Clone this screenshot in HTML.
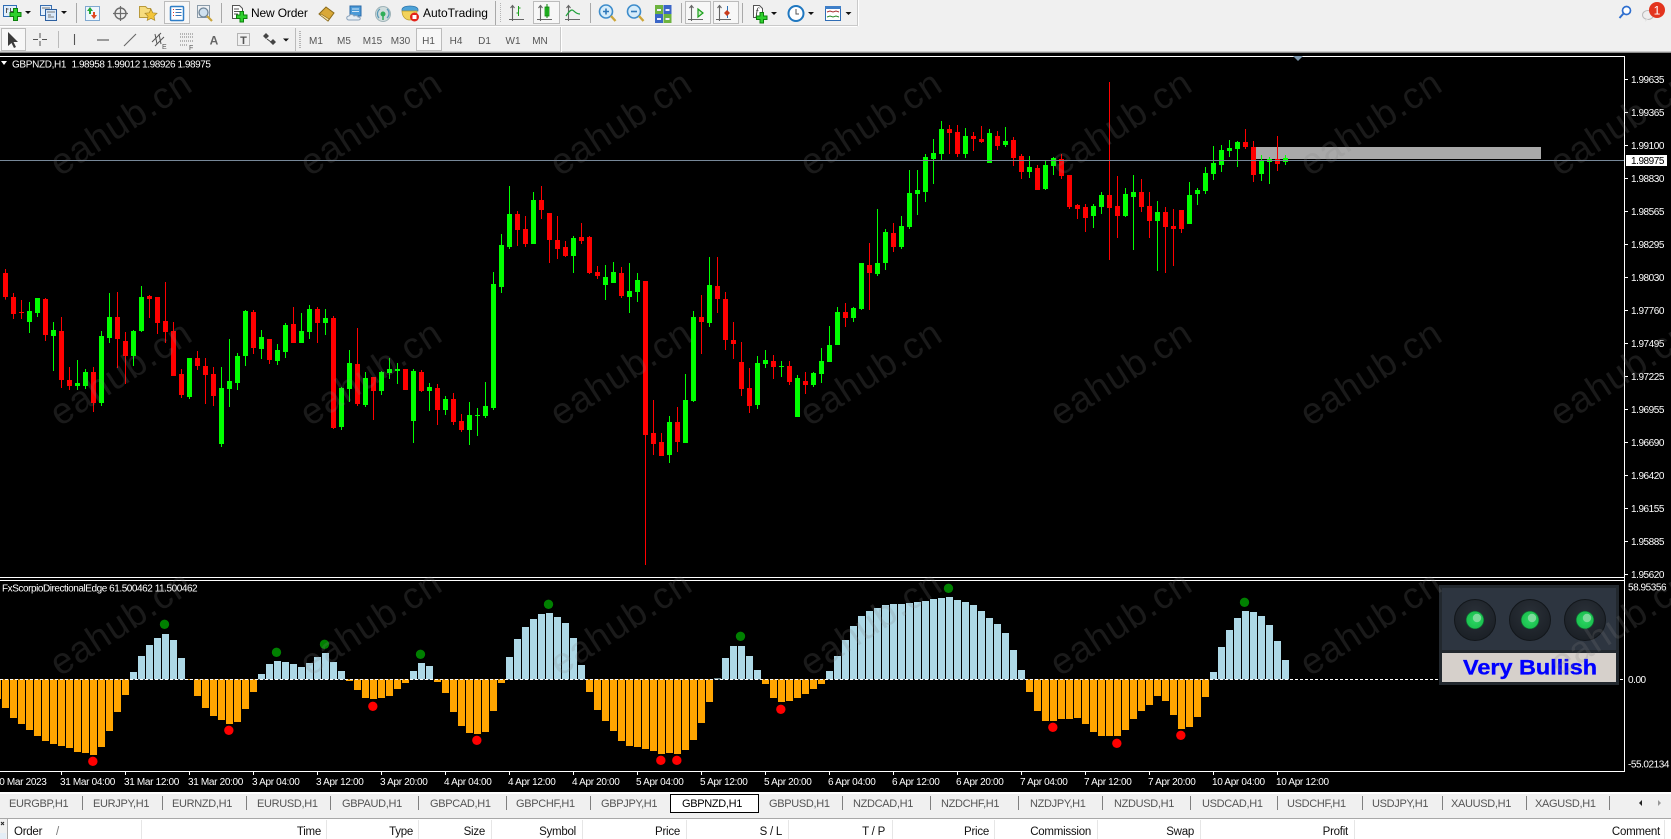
<!DOCTYPE html>
<html lang="en">
<head>
<meta charset="utf-8">
<title>GBPNZD,H1</title>
<style>
html,body{margin:0;padding:0;background:#f0f0f0;width:1671px;height:839px;overflow:hidden}
svg{display:block;position:absolute;left:0;top:0;font-family:"Liberation Sans",Arial,sans-serif}
.c{shape-rendering:crispEdges;fill:none}
.g{fill:none}
.ax{fill:#fff;font-size:10px;letter-spacing:-.45px}
.tm{fill:#fff;font-size:10px;letter-spacing:-.33px}
.tb{fill:#555;font-size:11px;letter-spacing:-.32px}
.th{fill:#111;font-size:11.5px;letter-spacing:-.25px}
.tf{fill:#555;font-size:10px;text-anchor:middle}
.wm{fill:rgba(128,128,128,.2);font-size:37px;letter-spacing:1.1px}
</style>
</head>
<body>
<svg width="1671" height="839" viewBox="0 0 1671 839" xmlns="http://www.w3.org/2000/svg">
<defs>
<radialGradient id="bz" cx="50%" cy="35%" r="65%"><stop offset="0" stop-color="#2a3038"/><stop offset="1" stop-color="#1b2026"/></radialGradient>
<radialGradient id="led" cx="50%" cy="50%" r="50%"><stop offset="0" stop-color="#2ad763"/><stop offset="1" stop-color="#1cc04f"/></radialGradient>
</defs>
<!-- toolbars -->
<rect width="1671" height="53" fill="#f0f0f0"/>
<path class="c" stroke="#c9c9c9" d="M0 25.500H858M0 51.500H1671M857.500 0V26M560.500 26V52"/>
<path class="c" stroke="#fff" d="M0 26.500H857M858.500 0V26M561.500 27V52"/>
<rect y="52" width="1671" height="1" fill="#8a8a8a"/>
<!-- separators row1 -->
<path class="c" stroke="#a9a9a9" d="M76.500 3V23M221.500 3V23M590.500 3V23M681.500 3V23M742.500 3V23M495.500 1V25"/>
<path class="c" stroke="#b5b5b5" stroke-dasharray="1 1" d="M500.500 3V23"/>
<!-- pressed boxes -->
<g class="c" stroke="#bcbcbc" style="fill:#f7f7f7">
<rect x="164.500" y="1.500" width="25" height="22"/>
<rect x="533.500" y="1.500" width="26" height="22"/>
<rect x="685.500" y="1.500" width="25" height="22"/>
<rect x="713.500" y="1.500" width="25" height="22"/>
<rect x="1.500" y="28.500" width="24" height="22"/>
<rect x="416.500" y="28.500" width="25" height="22"/>
</g>
<!-- new chart -->
<rect x="3.500" y="5.500" width="13" height="11" fill="#e2effb" stroke="#2f6db5"/>
<path d="M6.500 8v5M6.500 9h2M10.500 8v4M10.500 11.500h3" stroke="#555" fill="none"/>
<path d="M13.500 8.500h4v4h3.500v4h-3.500v4h-4v-4H10v-4h3.500z" fill="#2ed12e" stroke="#0c800c"/>
<path d="M25 11h6l-3 3z" fill="#111"/>
<!-- profiles -->
<rect x="40.500" y="5.500" width="11" height="10" fill="#e6f0fb" stroke="#3a6fb0"/>
<rect x="45.500" y="9.500" width="11" height="11" fill="#d9e8f9" stroke="#2c5f9f"/>
<path d="M42 8h8M47 12h8M48 15h3M48 17h6" stroke="#777" fill="none"/>
<path d="M61 11h6l-3 3z" fill="#111"/>
<!-- market watch -->
<rect x="85.500" y="6.500" width="14" height="14" fill="#eef5fc" stroke="#7fa8d0"/>
<path d="M90 7l3 4h-2v3h-2v-3h-2z" fill="#22a83a"/>
<path d="M94 19l-3-4h2v-3h2v3h2z" fill="#e0481e"/>
<!-- navigator crosshair -->
<circle cx="120.500" cy="13.500" r="5.500" fill="none" stroke="#6d6d6d" stroke-width="1.400"/>
<path d="M120.500 6v15M113 13.500h15" stroke="#6d6d6d" stroke-width="1.200"/>
<!-- folder star -->
<path d="M139.500 6.500h6l2 2h3v9h-11z" fill="#f6dc7e" stroke="#b99a3c"/>
<path d="M151 9l1.800 3.800 4.200.5-3 2.900.8 4.200-3.800-2-3.800 2 .8-4.200-3-2.900 4.200-.5z" fill="#f3c53a" stroke="#a9892f" stroke-width=".7"/>
<!-- terminal -->
<rect x="170.500" y="6.500" width="13" height="14" rx="1" fill="#fff" stroke="#2f7ec7" stroke-width="1.500"/>
<path d="M173 9.500h1M173 12.500h1M173 15.500h1" stroke="#d33"/><path d="M175.500 9.500h6M175.500 12.500h6M175.500 15.500h6" stroke="#3573b5"/>
<!-- tester -->
<rect x="197.500" y="5.500" width="12" height="12" fill="#eef1f4" stroke="#8a9aa8"/>
<circle cx="203.500" cy="12.500" r="4.500" fill="#cfe0ee" stroke="#6d8396" stroke-width="1.300"/>
<path d="M207 16l5 5" stroke="#c9a33a" stroke-width="2.200"/>
<!-- new order -->
<path d="M232.500 5.500h7l3 3v10h-10z" fill="#fff" stroke="#555"/>
<path d="M234 9h5M234 11.500h6M234 14h4" stroke="#555"/>
<path d="M240 11.500h3.500v3.500h3.500v3.500h-3.500v3.500H240v-3.500h-3.500V15H240z" fill="#2ed12e" stroke="#0c800c"/>
<text x="251" y="17" font-size="12" fill="#000" letter-spacing="-.15">New Order</text>
<!-- book -->
<path d="M319 14l7-7 8 6-6 8z" fill="#d9a838" stroke="#8a6a1a"/>
<path d="M320 15l8 6 1-2-8-5z" fill="#f3e2ac" stroke="#8a6a1a" stroke-width=".6"/>
<!-- market -->
<rect x="350" y="6" width="11" height="10" fill="#4a9ad8" stroke="#2a6aa8"/>
<path d="M352 9h7M352 11.500h7" stroke="#cfe6f8"/>
<path d="M349 20c-3 0-3-4 0-4 1-2 4-2 5 0 2-1 4 0 4 1 3 0 3 3 0 3z" fill="#e6edf4" stroke="#8aa2ba"/>
<!-- signals -->
<circle cx="383" cy="14" r="7.500" fill="#cfdcdc" stroke="#9fb3b8"/>
<path d="M379 18a6 6 0 0 1 1-9M387 9a6 6 0 0 1 0 9" fill="none" stroke="#5a9ab8" stroke-width="1.300"/>
<circle cx="383" cy="14" r="2.500" fill="#2fae58"/><path d="M383 14v6" stroke="#2fae58" stroke-width="1.500"/>
<!-- autotrading -->
<path d="M402 9c2-4 14-4 16 0v2h-16z" fill="#4da3d8" stroke="#2c72a8" stroke-width=".7"/>
<path d="M402 11h15c0 7-4 9-7.500 9S402 17 402 11z" fill="#f3d35a" stroke="#b89a2c" stroke-width=".7"/>
<circle cx="414.500" cy="17" r="4.500" fill="#e2231a"/><rect x="412.500" y="15" width="4" height="4" fill="#fff"/>
<text x="423" y="17" font-size="12" fill="#000">AutoTrading</text>
<!-- chart types -->
<g fill="none" stroke="#666" stroke-width="1.100">
<path d="M512.500 6v15M509 19.500h15M510.500 8l2-2.500 2 2.500"/>
<path d="M540.500 6v15M537 19.500h15M538.500 8l2-2.500 2 2.500"/>
<path d="M568.500 6v15M565 19.500h15M566.500 8l2-2.500 2 2.500"/>
<path d="M691.500 6v15M688 19.500h15M689.500 8l2-2.500 2 2.500"/>
<path d="M719.500 6v15M716 19.500h15M717.500 8l2-2.500 2 2.500"/>
</g>
<path d="M518.500 6v10M518.500 13h-2M518.500 8h2" stroke="#1aa01a" fill="none"/>
<rect x="545" y="7" width="4" height="9" fill="#2ed12e" stroke="#0c800c" stroke-width=".8"/><path d="M547 4v14" stroke="#0c800c"/>
<path d="M566 16c2-3 4-6 6-6s3 4 8 4" fill="none" stroke="#1fa03a" stroke-width="1.200"/>
<path d="M698 9l5 4-5 4z" fill="#cdeec6" stroke="#1aa01a" stroke-width="1.200"/>
<path d="M727.500 6v12" stroke="#2a6fb5"/><path d="M727 10l-3 3 3 3 3-3z" fill="#c93a1a"/>
<!-- zoom -->
<circle cx="606" cy="11.500" r="6.500" fill="#d6ecfa" stroke="#3d8ccb" stroke-width="1.600"/>
<path d="M603 11.500h6M606 8.500v6" stroke="#2f78b8" stroke-width="1.600"/>
<path d="M611 16l4.500 5" stroke="#cda63a" stroke-width="2.400"/>
<circle cx="634" cy="11.500" r="6.500" fill="#d6ecfa" stroke="#3d8ccb" stroke-width="1.600"/>
<path d="M631 11.500h6" stroke="#2f78b8" stroke-width="1.600"/>
<path d="M639 16l4.500 5" stroke="#cda63a" stroke-width="2.400"/>
<!-- tile -->
<rect x="655" y="5" width="8" height="9" fill="#6db33f"/><rect x="663.500" y="5" width="8" height="9" fill="#3a66c8"/>
<rect x="655" y="14" width="8" height="9" fill="#3a66c8"/><rect x="663.500" y="14" width="8" height="9" fill="#6db33f"/>
<path d="M657 10h4M665.500 10h4M657 19h4M665.500 19h4" stroke="#eef" stroke-width="2"/>
<!-- indicators -->
<path d="M753.500 5.500h6l3 3v9h-9z" fill="#fff" stroke="#555"/>
<text x="755.500" y="15" font-size="10" font-family="Liberation Serif" font-style="italic" fill="#222">f</text>
<path d="M760 12.500h3.500V16h3.500v3.500h-3.500V23H760v-3.500h-3.500V16H760z" fill="#2ed12e" stroke="#0c800c"/>
<path d="M771 12h6l-3 3z" fill="#111"/>
<!-- clock -->
<circle cx="796" cy="13.500" r="7.500" fill="#fff" stroke="#1f77c0" stroke-width="2"/>
<path d="M796 9v5h3" fill="none" stroke="#555"/>
<path d="M808 12h6l-3 3z" fill="#111"/>
<!-- templates -->
<rect x="825.500" y="6.500" width="15" height="14" fill="#fff" stroke="#2f6db5"/><rect x="825" y="6" width="16" height="3" fill="#3f7fc8"/>
<path d="M827 12l3-1 3 1 3-1 3 1" fill="none" stroke="#a33"/><path d="M827 17l3-1 3 1 3-1 3 1" fill="none" stroke="#2a8a2a"/>
<path d="M845.500 12h6l-3 3z" fill="#111"/>
<!-- search + bubble -->
<circle cx="1626.500" cy="10.500" r="4" fill="#fff" stroke="#2f6fcf" stroke-width="1.700"/>
<path d="M1623.500 13.500l-4 4.500" stroke="#2f6fcf" stroke-width="2"/>
<ellipse cx="1648" cy="15" rx="5.500" ry="4.500" fill="#eee" stroke="#bbb"/><path d="M1646 19l-1 3 3-3z" fill="#ddd"/>
<circle cx="1657" cy="10" r="8" fill="#e3341e"/>
<text x="1657" y="14.500" font-size="12" fill="#fff" text-anchor="middle">1</text>
<!-- row 2 -->
<path d="M8 32v14l3.500-3 2.500 5 2-1-2.500-5h4.500z" fill="#3a3a3a"/>
<path d="M40 33v5M40 41v5M33 39.500h5M42 39.500h5" stroke="#555" fill="none"/>
<path class="c" stroke="#bbb" d="M58.500 31V48M295.500 28V51"/>
<path class="c" stroke="#b5b5b5" stroke-dasharray="1 1" d="M299.500 31V49M300.500 31V49"/>
<path d="M74.500 34v11" stroke="#555" stroke-width="1.100"/>
<path d="M97 40h12" stroke="#555" stroke-width="1.100"/>
<path d="M124 46l12-12" stroke="#666" stroke-width="1.100"/>
<path d="M152 42l9-9M155 46l9-9M155 34l2 10M159 34l2 10" stroke="#555" fill="none"/>
<text x="162" y="49" font-size="7" fill="#555">E</text>
<path d="M180 34h13M180 37h13M180 41h13M180 45h7" stroke="#777" stroke-dasharray="1 1" fill="none"/>
<text x="189" y="50" font-size="7" fill="#555">F</text>
<text x="214" y="44.500" font-size="12" font-weight="bold" fill="#666" text-anchor="middle">A</text>
<rect x="237.500" y="33.500" width="12" height="12" fill="none" stroke="#777" stroke-dasharray="1 1"/>
<text x="243.500" y="44" font-size="11" font-weight="bold" fill="#555" text-anchor="middle">T</text>
<path d="M266 33l3 3-3 3-3-3zM273 39l3 3-3 3-3-3z" fill="#444"/><path d="M267 39l4 3" stroke="#444"/>
<path d="M283 38.500h6l-3 3z" fill="#111"/>
<g class="tf">
<text x="316" y="44">M1</text><text x="344" y="44">M5</text><text x="372.500" y="44">M15</text><text x="400.500" y="44">M30</text>
<text x="428.500" y="44">H1</text><text x="456" y="44">H4</text><text x="484.500" y="44">D1</text><text x="513" y="44">W1</text><text x="540" y="44">MN</text>
</g>

<!-- chart background -->
<rect y="53" width="1671" height="739" fill="#000"/>
<rect x="1256" y="147" width="285" height="12" fill="#a9a9a9"/>

<!-- candles A -->
<g transform="translate(.16667 260) scale(.3333333)">
<path class="g" stroke="#f00" stroke-width="3" d="M16 27V119M40 99V177M64 120V177M136 114V243M184 171V384M208 321V390M280 321V456M352 96V324M376 216V372M448 105V174M472 111V222M496 66V249M520 186V348M544 327V414M592 273V330M616 294V432M640 321V438M760 150V282M808 237V312M880 141V249M952 141V249M1000 168V507M1072 204V438M1120 351V480M1216 327V390"/>
<path class="g" stroke="#f00" stroke-width="15" d="M16 39V111M40 111V162M64 156V159M136 117V225M184 213V360M208 360V378M280 336V429M352 171V237M376 243V288M448 108V117M472 111V189M496 183V216M520 213V348M544 342V405M592 294V318M616 318V345M640 342V408M760 156V264M808 237V300M880 192V249M952 147V189M1000 174V504M1072 312V432M1120 351V393M1216 327V390"/>
<path class="g" stroke="#0f0" stroke-width="3" d="M88 126V219M112 114V171M160 186V333M232 300V390M256 327V387M304 213V438M328 99V249M400 210V318M424 78V216M568 294V417M664 321V561M688 237V441M712 279V390M736 150V318M784 210V297M832 252V315M856 189V294M904 159V249M928 135V237M976 147V225M1024 381V510M1048 270V426M1096 336V441M1144 333V405M1168 294V357M1192 309V372M1240 327V549"/>
<path class="g" stroke="#0f0" stroke-width="15" d="M88 153V186M112 114V159M160 210V228M232 369V378M256 336V378M304 228V429M328 171V234M400 213V288M424 111V213M568 294V411M664 384V552M688 363V387M712 288V369M736 153V288M784 231V267M832 270V303M856 195V276M904 213V249M928 147V216M976 174V189M1024 384V501M1048 309V387M1096 354V435M1144 336V393M1168 327V339M1192 327V333M1240 333V483"/>
</g>
<!-- candles B -->
<g transform="translate(420.16667 170) scale(.3333333)">
<path class="g" stroke="#f00" stroke-width="3" d="M4 600V666M52 642V765M100 669V765M124 732V786M292 123V228M316 138V231M364 48V147M388 129V279M412 138V267M436 213V261M484 159V222M508 198V312M532 288V327M604 291V384M676 333V1185M700 690V855M724 789V858M772 711V846M844 375V552M892 261V429M916 366V540M940 456V567M964 516V678M988 594V729M1060 555V627M1108 573V645M1156 606V672"/>
<path class="g" stroke="#f00" stroke-width="15" d="M4 606V663M52 654V720M100 687V756M124 753V780M292 132V180M316 177V222M364 90V120M388 129V210M412 210V237M436 231V258M484 201V213M508 201V309M532 306V318M604 309V378M676 333V795M700 789V822M724 816V858M772 756V816M844 441V456M892 348V387M916 387V510M940 510V522M964 576V657M988 654V708M1060 573V591M1108 588V636M1156 633V645"/>
<path class="g" stroke="#0f0" stroke-width="3" d="M28 639V723M76 678V735M148 696V825M172 714V798M196 636V744M220 306V720M244 192V369M268 48V237M340 66V222M460 198V309M556 285V390M580 276V339M628 279V429M652 309V396M748 738V879M796 612V819M820 423V696M868 261V471M1012 558V717M1036 540V594M1084 573V621M1132 615V741M1180 606V651M1204 534V639M1228 468V576M1252 411V525"/>
<path class="g" stroke="#0f0" stroke-width="15" d="M28 651V663M76 687V720M148 735V780M172 735V738M196 708V738M220 342V714M244 225V351M268 132V231M340 90V222M460 204V258M556 321V345M580 306V339M628 363V381M652 330V366M748 756V855M796 690V819M820 441V693M868 345V459M1012 579V705M1036 570V582M1084 588V591M1132 624V741M1180 609V645M1204 573V612M1228 525V576M1252 426V525"/>
</g>
<!-- candles C -->
<g transform="translate(840.16667 110) scale(.3333333)">
<path class="g" stroke="#f00" stroke-width="3" d="M16 579V651M88 399V600M160 339V426M328 45V132M352 45V141M400 66V123M424 48V99M472 63V120M520 81V168M544 132V207M592 165V240M664 132V207M688 195V297M712 282V327M736 282V366M808 -84V450M832 198V384M904 207V306M928 246V384M976 291V489M1000 297V468M1024 300V369M1216 57V117M1240 93V216M1312 78V183"/>
<path class="g" stroke="#f00" stroke-width="15" d="M16 606V624M88 465V489M160 369V411M328 57V69M352 66V132M400 78V87M424 87V96M472 78V108M520 90V144M544 138V186M592 174V240M664 147V198M688 195V291M712 285V297M736 291V324M808 255V294M832 288V318M904 246V291M928 288V333M976 306V351M1000 348V357M1024 300V357M1216 96V111M1240 111V195M1312 147V162"/>
<path class="g" stroke="#0f0" stroke-width="3" d="M40 591V636M64 459V600M112 297V498M136 357V480M184 318V417M208 180V357M232 180V315M256 132V276M280 87V222M304 33V153M376 54V144M448 57V159M496 51V111M568 138V204M616 153V240M640 141V195M760 282V354M784 246V312M856 234V321M880 195V420M952 273V483M1048 216V342M1072 234V285M1096 171V252M1120 108V210M1144 105V186M1168 90V141M1192 93V171M1264 135V213M1288 141V222M1336 135V165"/>
<path class="g" stroke="#0f0" stroke-width="15" d="M40 594V624M64 459V597M112 459V492M136 366V459M184 348V411M208 249V351M232 240V252M256 141V246M280 129V147M304 57V132M376 78V132M448 69V159M496 93V105M568 171V186M616 165V237M640 144V168M760 288V318M784 255V291M856 252V318M880 246V261M952 306V333M1048 255V342M1072 240V252M1096 189V243M1120 159V192M1144 120V165M1168 114V123M1192 96V117M1264 153V192M1288 147V156M1336 144V156"/>
</g>
<path class="c" stroke="#778899" d="M0 160.500H1625"/>

<!-- subwindow histogram -->
<g transform="translate(.16667 580) scale(.3333333)">
<path class="g" stroke="#ffa500" stroke-width="21" d="M-8 298V357M16 298V384M40 298V414M64 298V432M88 298V450M112 298V468M136 298V483M160 298V492M184 298V498M208 298V504M232 298V516M256 298V519M280 298V525M304 298V501M328 298V453M352 298V396M376 298V345M568 298V300M592 298V348M616 298V384M640 298V408M664 298V420M688 298V432M712 298V426M736 298V387M760 298V336M1048 298V303M1072 298V330M1096 298V354M1120 298V357M1144 298V354M1168 298V348M1192 298V327M1216 298V309M1312 298V306M1336 298V339M1360 298V396M1384 298V438M1408 298V459M1432 298V462M1456 298V456M1480 298V393M1504 298V309"/>
<path class="g" stroke="#add8e6" stroke-width="21" d="M400 298V276M424 298V228M448 298V195M472 298V174M496 298V162M520 298V180M544 298V234M784 298V282M808 298V252M832 298V243M856 298V246M880 298V252M904 298V261M928 298V249M952 298V231M976 298V219M1000 298V246M1024 298V273M1240 298V273M1264 298V249M1288 298V258"/>
<g fill="#f00"><circle cx="278" cy="544" r="14"/><circle cx="686" cy="451" r="14"/><circle cx="1118" cy="379" r="14"/><circle cx="1430" cy="481" r="14"/></g>
<g fill="#008000"><circle cx="493" cy="133" r="14"/><circle cx="829" cy="217" r="14"/><circle cx="973" cy="193" r="14"/><circle cx="1261" cy="223" r="14"/></g>
</g>
<g transform="translate(500.16667 580) scale(.3333333)">
<path class="g" stroke="#add8e6" stroke-width="21" d="M28 298V231M52 298V177M76 298V141M100 298V117M124 298V102M148 298V99M172 298V111M196 298V129M220 298V174M244 298V255M652 298V295M676 298V234M700 298V198M724 298V198M748 298V228M772 298V270M988 298V273M1012 298V228M1036 298V180M1060 298V138M1084 298V108M1108 298V93M1132 298V84M1156 298V75M1180 298V72M1204 298V72M1228 298V69M1252 298V66M1276 298V63M1300 298V57M1324 298V54M1348 298V51M1372 298V60M1396 298V66M1420 298V75M1444 298V93M1468 298V114M1492 298V132"/>
<path class="g" stroke="#ffa500" stroke-width="21" d="M268 298V336M292 298V390M316 298V423M340 298V453M364 298V483M388 298V498M412 298V501M436 298V507M460 298V513M484 298V522M508 298V519M532 298V522M556 298V510M580 298V480M604 298V429M628 298V366M796 298V312M820 298V354M844 298V366M868 298V363M892 298V354M916 298V342M940 298V327M964 298V312"/>
<g fill="#008000"><circle cx="145" cy="73" r="14"/><circle cx="721" cy="169" r="14"/><circle cx="1345" cy="25" r="14"/></g>
<g fill="#f00"><circle cx="482" cy="541" r="14"/><circle cx="530" cy="541" r="14"/><circle cx="842" cy="388" r="14"/></g>
</g>
<g transform="translate(1000.16667 580) scale(.3333333)">
<path class="g" stroke="#add8e6" stroke-width="21" d="M16 298V159M40 298V210M64 298V270M640 298V276M664 298V201M688 298V150M712 298V114M736 298V93M760 298V96M784 298V108M808 298V135M832 298V183M856 298V240"/>
<path class="g" stroke="#ffa500" stroke-width="21" d="M88 298V336M112 298V393M136 298V423M160 298V423M184 298V417M208 298V417M232 298V414M256 298V432M280 298V456M304 298V468M328 298V468M352 298V468M376 298V450M400 298V417M424 298V393M448 298V375M472 298V348M496 298V363M520 298V405M544 298V447M568 298V441M592 298V411M616 298V351"/>
<g fill="#f00"><circle cx="158" cy="442" r="14"/><circle cx="350" cy="490" r="14"/><circle cx="542" cy="466" r="14"/></g>
<circle cx="733" cy="67" r="14" fill="#008000"/>
</g>
<path class="c" stroke="#fff" stroke-dasharray="3 2" d="M0 679.500H1624"/>

<!-- frames -->
<path class="c" stroke="#fff" d="M0 56.500H1624.500V771.500H0M0 577.500H1624M0 580.500H1624"/>

<!-- chart labels -->
<path d="M1 61h6l-3 4z" fill="#fff"/>
<text x="12" y="67.500" fill="#fff" font-size="10" letter-spacing="-.35">GBPNZD,H1</text>
<text x="71.500" y="67.500" fill="#fff" font-size="10" letter-spacing="-.45">1.98958 1.99012 1.98926 1.98975</text>
<path d="M1293 56h10l-5 5z" fill="#7d97ad"/>
<text x="2" y="591.500" fill="#fff" font-size="10" letter-spacing="-.45">FxScorpioDirectionalEdge 61.500462 11.500462</text>

<!-- price axis -->
<path class="c" stroke="#fff" d="M1625 79.500h3M1625 112.500h3M1625 145.500h3M1625 178.500h3M1625 211.500h3M1625 244.500h3M1625 277.500h3M1625 310.500h3M1625 343.500h3M1625 376.500h3M1625 409.500h3M1625 442.500h3M1625 475.500h3M1625 508.500h3M1625 541.500h3M1625 574.500h3"/>
<g class="ax">
<text x="1631" y="83">1.99635</text><text x="1631" y="116">1.99365</text><text x="1631" y="149">1.99100</text>
<text x="1631" y="182">1.98830</text><text x="1631" y="215">1.98565</text><text x="1631" y="248">1.98295</text>
<text x="1631" y="281">1.98030</text><text x="1631" y="314">1.97760</text><text x="1631" y="347">1.97495</text>
<text x="1631" y="380">1.97225</text><text x="1631" y="413">1.96955</text><text x="1631" y="446">1.96690</text>
<text x="1631" y="479">1.96420</text><text x="1631" y="512">1.96155</text><text x="1631" y="545">1.95885</text>
<text x="1631" y="578">1.95620</text>
<text x="1628" y="590.500">58.95356</text><text x="1628" y="683">0.00</text><text x="1628" y="767.500">-55.02134</text>
</g>
<rect x="1626" y="155" width="41" height="11" fill="#fff"/>
<text x="1631" y="164" font-size="10" fill="#000" letter-spacing="-.45">1.98975</text>

<!-- indicator panel -->
<rect x="1439" y="585" width="180" height="100" fill="#22282e"/>
<rect x="1442" y="588" width="174" height="62" fill="#2d3540"/>
<rect x="1442" y="653" width="174" height="29" fill="#d6d0cb"/>
<g stroke="#12161a" fill="url(#bz)">
<circle cx="1475" cy="620" r="20.500"/><circle cx="1530" cy="620" r="20.500"/><circle cx="1585" cy="620" r="20.500"/>
</g>
<g fill="url(#led)" stroke="#0d6b30" stroke-width=".7">
<circle cx="1475" cy="620" r="8.800"/><circle cx="1530" cy="620" r="8.800"/><circle cx="1585" cy="620" r="8.800"/>
</g>
<g fill="#7edb9c">
<circle cx="1477" cy="618" r="4.200"/><circle cx="1532" cy="618" r="4.200"/><circle cx="1587" cy="618" r="4.200"/>
</g>
<text transform="translate(1463 674.500) scale(1.09 1)" font-size="21.500" font-weight="bold" fill="#0000ff" stroke="#0000ff" stroke-width=".35">Very Bullish</text>

<!-- time axis -->
<path class="c" stroke="#fff" d="M61.500 772v3M125.500 772v3M189.500 772v3M253.500 772v3M317.500 772v3M381.500 772v3M445.500 772v3M509.500 772v3M573.500 772v3M637.500 772v3M701.500 772v3M765.500 772v3M829.500 772v3M893.500 772v3M957.500 772v3M1021.500 772v3M1085.500 772v3M1149.500 772v3M1213.500 772v3M1277.500 772v3"/>
<g class="tm">
<text x="-6" y="785">30 Mar 2023</text><text x="60" y="785">31 Mar 04:00</text><text x="124" y="785">31 Mar 12:00</text><text x="188" y="785">31 Mar 20:00</text>
<text x="252" y="785">3 Apr 04:00</text><text x="316" y="785">3 Apr 12:00</text><text x="380" y="785">3 Apr 20:00</text>
<text x="444" y="785">4 Apr 04:00</text><text x="508" y="785">4 Apr 12:00</text><text x="572" y="785">4 Apr 20:00</text>
<text x="636" y="785">5 Apr 04:00</text><text x="700" y="785">5 Apr 12:00</text><text x="764" y="785">5 Apr 20:00</text>
<text x="828" y="785">6 Apr 04:00</text><text x="892" y="785">6 Apr 12:00</text><text x="956" y="785">6 Apr 20:00</text>
<text x="1020" y="785">7 Apr 04:00</text><text x="1084" y="785">7 Apr 12:00</text><text x="1148" y="785">7 Apr 20:00</text>
<text x="1212" y="785">10 Apr 04:00</text><text x="1276" y="785">10 Apr 12:00</text>
</g>

<!-- tab bar -->
<rect y="792" width="1671" height="2" fill="#fff"/>
<rect y="794" width="1671" height="45" fill="#f0f0f0"/>
<path class="c" stroke="#808080" d="M82.500 796v14M162.500 796v14M246.500 796v14M330.500 796v14M418.500 796v14M506.500 796v14M590.500 796v14M842.500 796v14M930.500 796v14M1018.500 796v14M1102.500 796v14M1190.500 796v14M1277.500 796v14M1362.500 796v14M1442.500 796v14M1526.500 796v14M1609.500 796v14"/>
<rect x="670.500" y="794.500" width="88" height="18" stroke="#000" class="c" style="fill:#fff"/>
<g class="tb">
<text x="9" y="807">EURGBP,H1</text><text x="93" y="807">EURJPY,H1</text><text x="172" y="807">EURNZD,H1</text><text x="257" y="807">EURUSD,H1</text>
<text x="342" y="807">GBPAUD,H1</text><text x="430" y="807">GBPCAD,H1</text><text x="516" y="807">GBPCHF,H1</text><text x="601" y="807">GBPJPY,H1</text>
<text x="682" y="807" style="fill:#000">GBPNZD,H1</text>
<text x="769" y="807">GBPUSD,H1</text><text x="853" y="807">NZDCAD,H1</text><text x="941" y="807">NZDCHF,H1</text><text x="1030" y="807">NZDJPY,H1</text>
<text x="1114" y="807">NZDUSD,H1</text><text x="1202" y="807">USDCAD,H1</text><text x="1287" y="807">USDCHF,H1</text><text x="1372" y="807">USDJPY,H1</text>
<text x="1451" y="807">XAUUSD,H1</text><text x="1535" y="807">XAGUSD,H1</text>
</g>
<path d="M1642 800v6l-3-3z" fill="#222"/><path d="M1658 800v6l3-3z" fill="#999"/>

<!-- table -->
<rect x="7" y="819" width="1664" height="20" fill="#fff"/>
<path class="c" stroke="#a8a8a8" d="M0 818.500H1671M7.500 818V839"/>
<rect x="0" y="833" width="6" height="6" fill="#e4edf6"/>
<path d="M1 822l3 3M4 822l-3 3" stroke="#222" fill="none"/>
<path class="c" stroke="#e6e6e6" d="M141.500 820v19M326.500 820v19M418.500 820v19M491.500 820v19M582.500 820v19M686.500 820v19M788.500 820v19M892.500 820v19M994.500 820v19M1097.500 820v19M1200.500 820v19M1354.500 820v19M1664.500 820v19"/>
<g class="th">
<text x="14" y="835">Order</text><text x="56" y="835" style="fill:#777">/</text>
<text x="321" y="835" text-anchor="end">Time</text><text x="413" y="835" text-anchor="end">Type</text><text x="485" y="835" text-anchor="end">Size</text>
<text x="576" y="835" text-anchor="end">Symbol</text><text x="680" y="835" text-anchor="end">Price</text><text x="782" y="835" text-anchor="end">S / L</text>
<text x="885" y="835" text-anchor="end">T / P</text><text x="989" y="835" text-anchor="end">Price</text><text x="1091" y="835" text-anchor="end">Commission</text>
<text x="1194" y="835" text-anchor="end">Swap</text><text x="1348" y="835" text-anchor="end">Profit</text><text x="1660" y="835" text-anchor="end">Comment</text>
</g>

<!-- watermark -->
<g class="wm">
<text transform="translate(60 177) rotate(-33)">eahub.cn</text><text transform="translate(310 177) rotate(-33)">eahub.cn</text><text transform="translate(560 177) rotate(-33)">eahub.cn</text><text transform="translate(810 177) rotate(-33)">eahub.cn</text><text transform="translate(1060 177) rotate(-33)">eahub.cn</text><text transform="translate(1310 177) rotate(-33)">eahub.cn</text><text transform="translate(1560 177) rotate(-33)">eahub.cn</text>
<text transform="translate(60 427) rotate(-33)">eahub.cn</text><text transform="translate(310 427) rotate(-33)">eahub.cn</text><text transform="translate(560 427) rotate(-33)">eahub.cn</text><text transform="translate(810 427) rotate(-33)">eahub.cn</text><text transform="translate(1060 427) rotate(-33)">eahub.cn</text><text transform="translate(1310 427) rotate(-33)">eahub.cn</text><text transform="translate(1560 427) rotate(-33)">eahub.cn</text>
<text transform="translate(60 677) rotate(-33)">eahub.cn</text><text transform="translate(310 677) rotate(-33)">eahub.cn</text><text transform="translate(560 677) rotate(-33)">eahub.cn</text><text transform="translate(810 677) rotate(-33)">eahub.cn</text><text transform="translate(1060 677) rotate(-33)">eahub.cn</text><text transform="translate(1310 677) rotate(-33)">eahub.cn</text><text transform="translate(1560 677) rotate(-33)">eahub.cn</text>
</g>
</svg>
</body>
</html>
